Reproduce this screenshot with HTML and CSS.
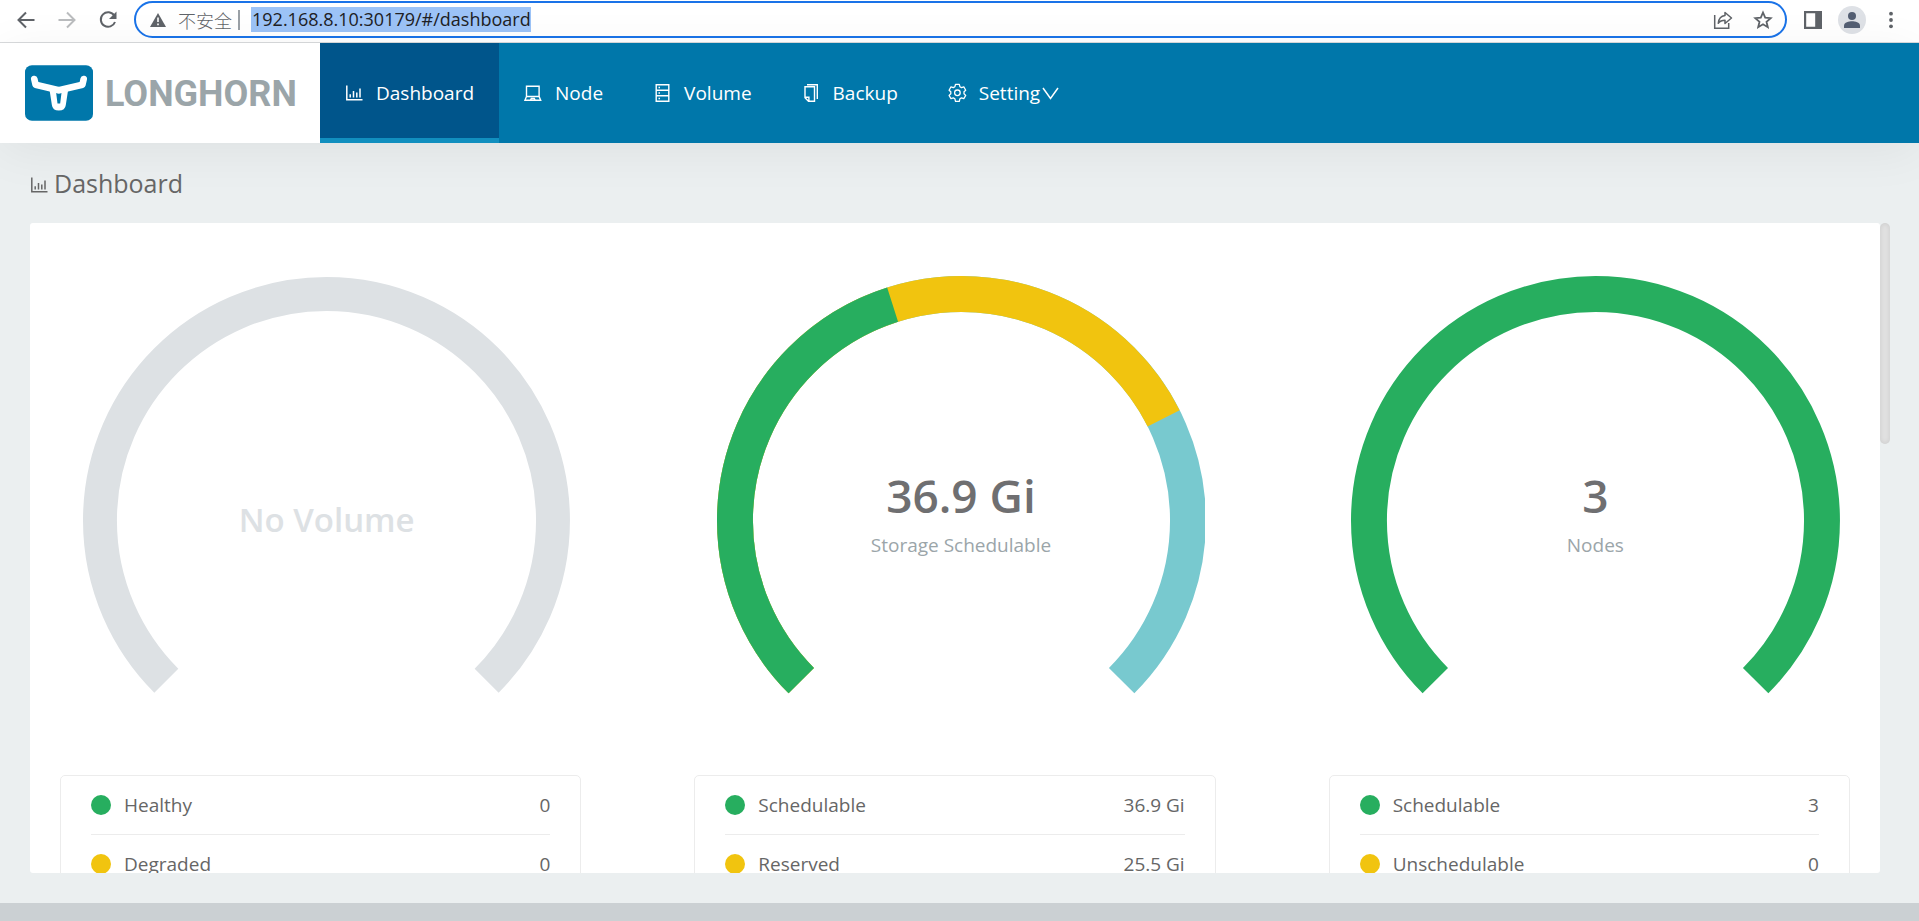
FILE: index.html
```html
<!DOCTYPE html>
<html lang="en">
<head>
<meta charset="utf-8">
<title>Longhorn</title>
<link rel="stylesheet" href="styles.css">
</head>
<body>
<svg class="defs" aria-hidden="true">
  <symbol id="chart" viewBox="0 0 20 20"><path d="M1.800 2.500v14.200h15.700" fill="none" stroke="currentColor" stroke-width="1.500"/><path d="M5.200 14.500v-3.200M8.500 14.500V8M11.800 14.500V9.500M15 14.500V5.500" fill="none" stroke="currentColor" stroke-width="1.500"/></symbol>
</svg>

<div class="toolbar">
  <div class="toolbar-nav">
    <button class="tool" aria-label="Back"><svg viewBox="0 0 24 24"><path d="M20.500 12H5M12 4.500 4.500 12l7.500 7.500" fill="none" stroke="currentColor" stroke-width="2"/></svg></button>
    <button class="tool tool-off" aria-label="Forward"><svg viewBox="0 0 24 24"><path d="M3.500 12H19M12 4.500 19.500 12 12 19.500" fill="none" stroke="currentColor" stroke-width="2"/></svg></button>
    <button class="tool" aria-label="Reload"><svg viewBox="0 0 24 24"><path d="M18.300 7.600A7.300 7.300 0 1 0 19 14" fill="none" stroke="currentColor" stroke-width="2"/><path d="M20.500 3.500v7.500H13z" fill="currentColor"/></svg></button>
  </div>
  <div class="address">
    <svg class="warn" viewBox="0 0 16 16"><path d="M8 1 16 15H0z" fill="#5f6368"/><path d="M8 5.500v4.500M8 11.500v1.700" stroke="#fff" stroke-width="1.600"/></svg>
    <span class="insecure">不安全</span>
    <span class="divider"></span>
    <input class="url" type="text" aria-label="Address" value="192.168.8.10:30179/#/dashboard">
    <span class="spacer"></span>
    <button class="tool" aria-label="Share"><svg viewBox="0 0 24 24"><path d="M3.700 7v13.300h14V15" fill="none" stroke="currentColor" stroke-width="1.500"/><path d="M14 4.500 20.500 10 14 15.500V12.300c-3 0-5 .7-6.700 3C7.700 11 10 8 14 7.600z" fill="none" stroke="currentColor" stroke-width="1.500" stroke-linejoin="round"/></svg></button>
    <button class="tool" aria-label="Bookmark"><svg viewBox="0 0 24 24"><path d="M12 4.500l2.200 5.100 5.500.5-4.200 3.700 1.300 5.400-4.800-2.900-4.800 2.900 1.300-5.400L4.300 10.100l5.500-.5z" fill="none" stroke="currentColor" stroke-width="1.800"/></svg></button>
  </div>
  <div class="toolbar-end">
    <button class="tool" aria-label="Side panel"><svg viewBox="0 0 24 24"><path d="M3 3h18v18H3zM5.200 5.200v13.600h9V5.200z" fill="currentColor" fill-rule="evenodd"/></svg></button>
    <button class="tool tool-user" aria-label="Profile"><svg viewBox="0 0 28 28"><circle cx="14" cy="14" r="14" fill="#dee1e6"/><circle cx="14" cy="10" r="4" fill="#535e72"/><path d="M6 22v-2.500c0-3 5-4.300 8-4.300s8 1.300 8 4.300V22z" fill="#535e72"/></svg></button>
    <button class="tool" aria-label="Menu"><svg viewBox="0 0 24 24"><g fill="currentColor"><circle cx="12" cy="5.700" r="1.900"/><circle cx="12" cy="12" r="1.900"/><circle cx="12" cy="18.300" r="1.900"/></g></svg></button>
  </div>
</div>

<header class="header">
  <a class="brand" href="#/">
    <svg class="brand-mark" viewBox="0 0 205 168"><rect width="205" height="168" rx="21" fill="#0077aa"/>
      <path d="M28 42 32 59 102 76 173 59 177 42" fill="none" stroke="#fff" stroke-width="20" stroke-linecap="round" stroke-linejoin="round"/>
      <path d="M73 68h58l-8 52q-2 17-21 17t-21-17z" fill="#fff"/><path d="M94 84q8 5 16 0l-4 32h-8z" fill="#0077aa"/></svg>
    <span class="brand-name">LONGHORN</span>
  </a>
  <nav class="nav">
    <a class="nav-item nav-active" href="#/dashboard"><svg class="icon"><use href="#chart"/></svg>Dashboard</a>
    <a class="nav-item" href="#/node"><svg class="icon" viewBox="0 0 20 20"><path d="M2.500 13.500V3.200h12.600v10.300M2.500 13.500.9 17.300h15.800l-1.600-3.800zM6.500 17l.8-1.500h3l.8 1.500" fill="none" stroke="currentColor" stroke-width="1.400"/></svg>Node</a>
    <a class="nav-item" href="#/volume"><svg class="icon" viewBox="0 0 20 20"><path d="M3.200 1.700h12.600v16.600H3.200zM3.200 7.200h12.600M3.200 12.700h12.600" fill="none" stroke="currentColor" stroke-width="1.400"/><path d="M5.500 4.500h1.500M5.500 10h1.500M5.500 15.500h1.500" stroke="currentColor" stroke-width="1.400"/></svg>Volume</a>
    <a class="nav-item" href="#/backup"><svg class="icon" viewBox="0 0 20 20"><path d="M3 3.700h9.500v14.600H6.500L3 14.800zM3 14.300h3.900v4M5 1.700h10.300V16" fill="none" stroke="currentColor" stroke-width="1.400"/></svg>Backup</a>
    <a class="nav-item" href="#/setting"><svg class="icon" viewBox="0 0 20 20"><g fill="none" stroke="currentColor" stroke-width="1.300" stroke-linejoin="round"><path d="M7.500 1.300h3.800l.6 2.400 1.600.9 2.300-.8 1.900 3.400-1.700 1.600v1.900l1.700 1.700-1.900 3.300-2.300-.8-1.600.9-.6 2.500H7.500l-.6-2.500-1.600-.9-2.300.8-1.900-3.300 1.700-1.700V8.800L1.100 7.200 3 3.800l2.300.8 1.600-.9z"/><circle cx="9.400" cy="9.800" r="2.800"/></g></svg><span class="with-caret">Setting<svg class="caret" viewBox="0 0 17 17"><path d="M1 3l7.500 10.500L16 3" fill="none" stroke="currentColor" stroke-width="1.500"/></svg></span></a>
  </nav>
</header>

<main class="main">
  <h1 class="title"><svg class="icon"><use href="#chart"/></svg>Dashboard</h1>
  <div class="scroll">
    <div class="card">
      <section class="panel">
        <div class="gauge">
          <svg class="ring" viewBox="0 0 490 490"><circle class="arc arc-empty" cx="245" cy="245" r="227" pathLength="360" stroke-dasharray="270 90" transform="rotate(135 245 245)"/></svg>
          <div class="gauge-text"><p class="gauge-none">No Volume</p></div>
        </div>
        <ul class="legend">
          <li class="row"><span class="dot green"></span><span>Healthy</span><span class="value">0</span></li>
          <li class="row"><span class="dot yellow"></span><span>Degraded</span><span class="value">0</span></li>
        </ul>
      </section>
      <section class="panel">
        <div class="gauge">
          <svg class="ring" viewBox="0 0 490 490"><g transform="rotate(135 245 245)"><circle class="arc arc-blue" cx="245" cy="245" r="227" pathLength="360" stroke-dasharray="270 90"/><circle class="arc arc-yellow" cx="245" cy="245" r="227" pathLength="360" stroke-dasharray="198.200 161.800"/><circle class="arc arc-green" cx="245" cy="245" r="227" pathLength="360" stroke-dasharray="117.300 242.700"/></g></svg>
          <div class="gauge-text"><p class="gauge-value">36.9 Gi</p><p class="gauge-label">Storage Schedulable</p></div>
        </div>
        <ul class="legend">
          <li class="row"><span class="dot green"></span><span>Schedulable</span><span class="value">36.9 Gi</span></li>
          <li class="row"><span class="dot yellow"></span><span>Reserved</span><span class="value">25.5 Gi</span></li>
        </ul>
      </section>
      <section class="panel">
        <div class="gauge">
          <svg class="ring" viewBox="0 0 490 490"><circle class="arc arc-green" cx="245" cy="245" r="227" pathLength="360" stroke-dasharray="270 90" transform="rotate(135 245 245)"/></svg>
          <div class="gauge-text"><p class="gauge-value">3</p><p class="gauge-label">Nodes</p></div>
        </div>
        <ul class="legend">
          <li class="row"><span class="dot green"></span><span>Schedulable</span><span class="value">3</span></li>
          <li class="row"><span class="dot yellow"></span><span>Unschedulable</span><span class="value">0</span></li>
        </ul>
      </section>
    </div>
    <div class="thumb"></div>
  </div>
</main>
<footer class="footer"></footer>
</body>
</html>
```
FILE: styles.css
```css
* { box-sizing: border-box; }

body {
  margin: 0;
  height: 100vh;
  display: flex;
  flex-direction: column;
  overflow: hidden;
  background: #ebeff0;
  color: #666;
  font: 19px/28px "Open Sans", "Noto Sans", "Noto Sans CJK SC", sans-serif;
}

p, ul, h1 { margin: 0; padding: 0; }
a { color: inherit; text-decoration: none; }
.defs { display: none; }

/* Browser toolbar */
.toolbar {
  display: flex;
  align-items: center;
  gap: 14px;
  padding: 1px 16px 4px 14px;
  background: #fff;
  border-bottom: 1px solid #d8dadc;
}
.toolbar-nav { display: flex; gap: 17px; }
.toolbar-end { display: flex; align-items: center; gap: 13px; }
.tool {
  display: flex;
  width: 24px;
  height: 24px;
  padding: 0;
  border: 0;
  background: none;
  color: #5f6368;
}
.tool svg { width: 100%; height: 100%; }
.tool-off { color: #babcbe; }
.tool-user { width: 28px; height: 28px; }
.address {
  flex: 1;
  display: flex;
  align-items: center;
  height: 37px;
  padding: 0 10px 0 14px;
  border: 2px solid #1a73e8;
  border-radius: 19px;
}
.address .tool + .tool { margin-left: 16px; }
.warn { width: 16px; height: 16px; margin-right: 12px; }
.insecure {
  color: #5f6368;
  font: 18px/24px "Noto Sans CJK SC", sans-serif;
  font-weight: 300;
}
.divider { width: 2px; height: 20px; margin: 0 11px 0 6px; background: #9aa0a6; }
.url {
  width: 280px;
  height: 25px;
  padding: 0 1px;
  border: 0;
  background: #9cc3f7;
  color: #202124;
  font: 18px/25px "Open Sans", "Noto Sans", sans-serif;
}
.spacer { flex: 1; }

/* Application header */
.header {
  display: flex;
  height: 100px;
  flex: none;
  background: #0077aa;
  color: #fff;
  box-shadow: 0 8px 50px rgba(0, 0, 0, 0.06);
}
.brand {
  display: flex;
  align-items: center;
  gap: 12px;
  width: 320px;
  padding-left: 25px;
  background: #fff;
}
.brand-mark { width: 68px; height: 56px; }
.brand-name { padding-top: 2px; color: #9ba5a9; font: 700 36px/40px Roboto, sans-serif; }
.nav { display: flex; }
.nav-item {
  display: flex;
  align-items: center;
  gap: 11px;
  padding: 5px 25px 0;
  border-bottom: 5px solid transparent;
}
.nav-active { background: #00558b; border-bottom-color: #118fbf; }
.icon { width: 20px; height: 20px; flex: none; }
.with-caret { display: flex; align-items: center; gap: 2px; }
.caret { width: 17px; height: 17px; }

/* Content */
.main {
  flex: 1;
  min-height: 0;
  display: flex;
  flex-direction: column;
  padding: 20px 29px 30px 30px;
}
.title {
  display: flex;
  align-items: center;
  gap: 4px;
  height: 60px;
  padding-bottom: 20px;
  font-weight: 400;
  font-size: 25px;
}
.title .icon { margin-top: 4px; }
.scroll { flex: 1; min-height: 0; display: flex; align-items: flex-start; }
.card {
  flex: 1;
  height: 100%;
  display: grid;
  grid-template-columns: repeat(3, 1fr);
  gap: 113px;
  padding: 53px 30px 0;
  overflow: hidden;
  background: #fff;
  border-radius: 3px;
}
.thumb {
  width: 10px;
  height: 34%;
  border-radius: 5px;
  background: #e1e1e1;
  box-shadow: inset 0 0 5px rgba(0, 0, 0, 0.1);
}
.gauge { display: grid; place-items: center; padding: 0 0 10px 12px; }
.ring, .gauge-text { grid-area: 1 / 1; }
.ring { display: block; width: 96%; height: auto; }
.arc { fill: none; stroke-width: 36; }
.arc-empty { stroke: #dde1e4; stroke-width: 34; }
.arc-green { stroke: #27ae5f; }
.arc-yellow { stroke: #f1c40f; }
.arc-blue { stroke: #78c9cf; }
.gauge-text { text-align: center; }
.gauge-none { color: #dde1e4; font-size: 33px; line-height: 48px; font-weight: 600; }
.gauge-value { color: #6f6f71; font-size: 46px; line-height: 60px; font-weight: 600; }
.gauge-label { padding-bottom: 10px; color: #9ba5a9; line-height: 40px; }
.legend {
  list-style: none;
  padding: 0 30px;
  border: 1px solid #ececec;
  border-radius: 5px;
}
.row {
  display: flex;
  align-items: center;
  gap: 13px;
  height: 59px;
  border-bottom: 1px solid #ececec;
}
.row:last-child { border-bottom: 0; }
.dot { width: 20px; height: 20px; border-radius: 50%; }
.green { background: #27ae5f; }
.yellow { background: #f1c40f; }
.value { margin-left: auto; }

.footer { flex: none; height: 18px; background: #cbd0d3; }
```
